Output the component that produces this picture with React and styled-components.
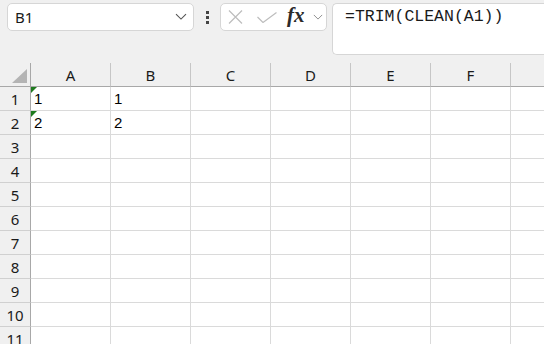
import React from 'react';
import styled, { createGlobalStyle } from 'styled-components';

const GlobalStyle = createGlobalStyle`
  html, body {
    margin: 0;
    padding: 0;
    background: #f0f0f0;
    overflow: hidden;
  }
  body {
    font-family: "Noto Sans", "Liberation Sans", sans-serif;
  }
`;

const Page = styled.div`
  width: 544px;
  height: 344px;
  overflow: hidden;
  display: flex;
  flex-direction: column;
`;

const Toolbar = styled.div`
  height: 63px;
  flex: none;
  display: flex;
  align-items: flex-start;
  padding: 3px 0 0 7px;
  box-sizing: border-box;
  background: #f0f0f0;
`;

const NameBox = styled.div`
  width: 187px;
  height: 28px;
  box-sizing: border-box;
  background: #fff;
  border: 1px solid #d6d6d6;
  border-radius: 5px;
  display: flex;
  align-items: center;
  justify-content: space-between;
  padding: 0 6px 0 7px;
  font-size: 15px;
  color: #1a1a1a;
`;

const Dots = styled.div`
  width: 26px;
  height: 28px;
  display: flex;
  flex-direction: column;
  align-items: center;
  justify-content: center;
  gap: 2px;
  span {
    width: 3px;
    height: 3px;
    background: #444;
  }
`;

const ButtonGroup = styled.div`
  width: 107px;
  height: 28px;
  box-sizing: border-box;
  background: #fff;
  border: 1px solid #d6d6d6;
  border-radius: 5px;
  display: flex;
  align-items: center;
  padding-left: 7px;
`;

const IconSlot = styled.div`
  width: ${p => p.$w}px;
  display: flex;
  align-items: center;
  justify-content: ${p => p.$justify || 'flex-start'};
`;

const Fx = styled.span`
  font-family: "Liberation Serif", "DejaVu Serif", serif;
  font-style: italic;
  font-weight: 600;
  font-size: 21px;
  color: #2b2b2b;
  line-height: 1;
  margin-top: -3px;
  margin-left: -1px;
`;

const FormulaBox = styled.div`
  margin-left: 5px;
  flex: 1;
  height: 52px;
  box-sizing: border-box;
  background: #fff;
  border: 1px solid #d6d6d6;
  border-right: none;
  border-radius: 5px 0 0 5px;
  padding: 3px 0 0 12px;
  font-family: "Liberation Mono", "DejaVu Sans Mono", monospace;
  font-size: 16.5px;
  color: #1a1a1a;
`;

const Grid = styled.div`
  flex: 1;
  display: grid;
  grid-template-columns: 31px repeat(6, 80px) 34px;
  grid-auto-rows: 24px;
  grid-template-rows: 24px;
  background: #fff;
  overflow: hidden;
`;

const Corner = styled.div`
  background: #f0f0f0;
  box-sizing: border-box;
  border-right: 1px solid #a8a8a8;
  border-bottom: 1px solid #a8a8a8;
  position: relative;
  &::after {
    content: '';
    position: absolute;
    right: 3px;
    bottom: 3px;
    width: 0;
    height: 0;
    border-left: 15px solid transparent;
    border-bottom: 14px solid #b4b4b4;
  }
`;

const ColHead = styled.div`
  background: #f0f0f0;
  box-sizing: border-box;
  border-right: 1px solid #c6c6c6;
  border-bottom: 1px solid #a8a8a8;
  display: flex;
  align-items: center;
  justify-content: center;
  font-size: 15px;
  color: #1a1a1a;
  padding-top: 1px;
`;

const RowHead = styled.div`
  background: #f0f0f0;
  box-sizing: border-box;
  border-right: 1px solid #a8a8a8;
  border-bottom: 1px solid #d0d0d0;
  display: flex;
  align-items: center;
  justify-content: center;
  font-size: 15px;
  color: #1a1a1a;
  padding-top: 1px;
`;

const Cell = styled.div`
  box-sizing: border-box;
  border-right: 1px solid #dadada;
  border-bottom: 1px solid #dadada;
  font-family: "Liberation Sans", Arial, sans-serif;
  font-size: 15px;
  color: #000;
  padding: 3px 0 0 3px;
  position: relative;
  ${p => p.$flag && `
    &::before {
      content: '';
      position: absolute;
      left: 0;
      top: 0;
      border-top: 6px solid #1e7a1e;
      border-right: 6px solid transparent;
    }
  `}
`;

const cols = ['A', 'B', 'C', 'D', 'E', 'F'];
const data = { 1: { A: '1', B: '1' }, 2: { A: '2', B: '2' } };

const Chevron = ({ size = 12, color = '#555' }) => (
  <svg width={size} height={size * 0.6} viewBox="0 0 12 7" fill="none">
    <path d="M1 1 L6 6 L11 1" stroke={color} strokeWidth="1.1" />
  </svg>
);

export default function App() {
  const rows = Array.from({ length: 11 }, (_, i) => i + 1);
  return (
    <Page>
      <GlobalStyle />
      <Toolbar>
        <NameBox>
          <span>B1</span>
          <Chevron />
        </NameBox>
        <Dots>
          <span />
          <span />
          <span />
        </Dots>
        <ButtonGroup>
          <IconSlot $w={29}>
            <svg width="15" height="14" viewBox="0 0 15 14">
              <path d="M1 0.5 L14 13.5 M14 0.5 L1 13.5" stroke="#bdbdbd" strokeWidth="1.2" />
            </svg>
          </IconSlot>
          <IconSlot $w={31}>
            <svg width="20" height="11" viewBox="0 0 20 11">
              <path d="M0.5 5 L6 10.5 L19.5 0.5" stroke="#bdbdbd" strokeWidth="1.2" fill="none" />
            </svg>
          </IconSlot>
          <IconSlot $w={25}>
            <Fx>fx</Fx>
          </IconSlot>
          <IconSlot $w={12}>
            <Chevron size={10} color="#888" />
          </IconSlot>
        </ButtonGroup>
        <FormulaBox>=TRIM(CLEAN(A1))</FormulaBox>
      </Toolbar>
      <Grid>
        <Corner />
        {cols.map(c => <ColHead key={c}>{c}</ColHead>)}
        <ColHead />
        {rows.map(r => (
          <React.Fragment key={r}>
            <RowHead>{r}</RowHead>
            {cols.map(c => (
              <Cell key={c} $flag={c === 'A' && data[r]}>
                {data[r] && data[r][c]}
              </Cell>
            ))}
            <Cell />
          </React.Fragment>
        ))}
      </Grid>
    </Page>
  );
}
